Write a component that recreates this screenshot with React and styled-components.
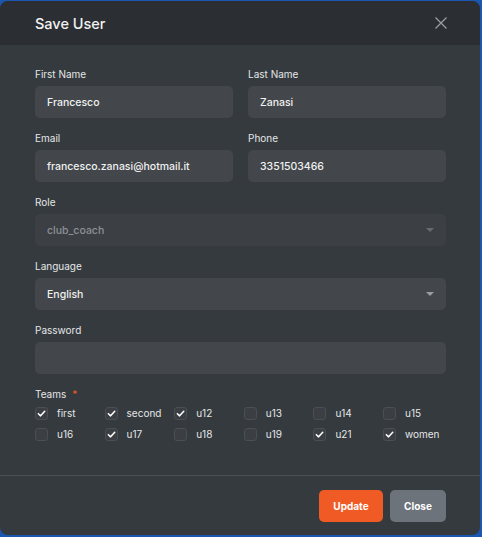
import React from 'react'
import styled, { createGlobalStyle } from 'styled-components'

const GlobalStyle = createGlobalStyle`
  html, body {
    margin: 0;
    padding: 0;
    background: #1b56b0;
  }
  body {
    font-family: Inter, "Noto Sans", sans-serif;
  }
`

const Modal = styled('div')`
  box-sizing: border-box;
  width: 480px;
  height: 534px;
  margin-top: 1px;
  background: #353a3e;
  border-radius: 8px;
  overflow: hidden;
  display: flex;
  flex-direction: column;
`

const Header = styled('div')`
  height: 44px;
  background: #2b2e32;
  display: flex;
  align-items: center;
  justify-content: space-between;
  padding: 0 35px;
`

const Title = styled('h2')`
  margin: 0;
  font-size: 14.5px;
  font-weight: 500;
  color: #f2f2f2;
`

const CloseIcon = styled('button')`
  border: 0;
  background: none;
  padding: 0;
  margin-right: -3px;
  display: flex;
  cursor: pointer;
`

const Body = styled('div')`
  flex: 1;
  padding: 22px 34px 0 35px;
`

const Row = styled('div')`
  display: grid;
  grid-template-columns: ${p => (p.split ? '1fr 1fr' : '1fr')};
  column-gap: 15px;
  margin-bottom: 13px;
`

const Field = styled('div')`
  display: flex;
  flex-direction: column;
`

const Label = styled('label')`
  font-size: 10px;
  line-height: 14px;
  color: #e4e6e8;
  margin-bottom: 5px;
`

const Required = styled('span')`
  color: #f05a24;
  margin-left: 6px;
`

const Input = styled('div')`
  box-sizing: border-box;
  height: 32px;
  border-radius: 5px;
  background: ${p => (p.disabled ? '#3c4044' : '#43474b')};
  display: flex;
  align-items: center;
  justify-content: space-between;
  padding: 0 12px;
  font-size: 10.5px;
  font-weight: 500;
  color: ${p => (p.disabled ? '#8d9196' : '#f0f0f0')};
`

const Caret = styled('span')`
  width: 0;
  height: 0;
  border-left: 4px solid transparent;
  border-right: 4px solid transparent;
  border-top: 4px solid ${p => (p.dim ? '#676b70' : '#9a9ea3')};
`

const TeamGrid = styled('div')`
  display: grid;
  grid-template-columns: repeat(6, 69.6px);
  row-gap: 7px;
`

const Team = styled('div')`
  display: flex;
  align-items: center;
  height: 14px;
  font-size: 10px;
  color: #e4e6e8;
`

const Box = styled('span')`
  box-sizing: border-box;
  width: 13px;
  height: 13px;
  border-radius: 3px;
  background: #3b3f43;
  border: 1px solid #4a4f54;
  margin-right: 9px;
  display: flex;
  align-items: center;
  justify-content: center;
`

const Footer = styled('div')`
  border-top: 1px solid #4a4f54;
  display: flex;
  justify-content: flex-end;
  gap: 7px;
  padding: 14px 34px 13px 0;
`

const Button = styled('button')`
  height: 32px;
  width: ${p => (p.primary ? '64px' : '56px')};
  border: 0;
  border-radius: 5px;
  padding: 0;
  background: ${p => (p.primary ? '#f05a24' : '#6c737b')};
  color: #fff;
  font-family: inherit;
  font-size: 10px;
  font-weight: 700;
  cursor: pointer;
`

const teams = [
  ['first', true], ['second', true], ['u12', true], ['u13', false], ['u14', false], ['u15', false],
  ['u16', false], ['u17', true], ['u18', false], ['u19', false], ['u21', true], ['women', true],
]

const Check = () => (
  <svg width="9" height="9" viewBox="0 0 10 10">
    <path d="M1.5 5.2 L4 7.6 L8.6 2.6" fill="none" stroke="#fff" strokeWidth="1.7" strokeLinecap="round" strokeLinejoin="round" />
  </svg>
)

const TextField = ({ label, value }) => (
  <Field>
    <Label>{label}</Label>
    <Input>{value}</Input>
  </Field>
)

export default function App() {
  return (
    <>
      <GlobalStyle />
      <Modal>
        <Header>
          <Title>Save User</Title>
          <CloseIcon aria-label="close">
            <svg width="14" height="14" viewBox="0 0 14 14">
              <path d="M1.5 1.5 L12.5 12.5 M12.5 1.5 L1.5 12.5" stroke="#9a9ea3" strokeWidth="1.3" />
            </svg>
          </CloseIcon>
        </Header>
        <Body>
          <Row split>
            <TextField label="First Name" value="Francesco" />
            <TextField label="Last Name" value="Zanasi" />
          </Row>
          <Row split>
            <TextField label="Email" value="francesco.zanasi@hotmail.it" />
            <TextField label="Phone" value="3351503466" />
          </Row>
          <Row>
            <Field>
              <Label>Role</Label>
              <Input disabled>
                club_coach
                <Caret dim />
              </Input>
            </Field>
          </Row>
          <Row>
            <Field>
              <Label>Language</Label>
              <Input>
                English
                <Caret />
              </Input>
            </Field>
          </Row>
          <Row>
            <TextField label="Password" value="" />
          </Row>
          <Field>
            <Label>
              Teams<Required>*</Required>
            </Label>
            <TeamGrid>
              {teams.map(([name, on]) => (
                <Team key={name}>
                  <Box>{on && <Check />}</Box>
                  {name}
                </Team>
              ))}
            </TeamGrid>
          </Field>
        </Body>
        <Footer>
          <Button primary>Update</Button>
          <Button>Close</Button>
        </Footer>
      </Modal>
    </>
  )
}
